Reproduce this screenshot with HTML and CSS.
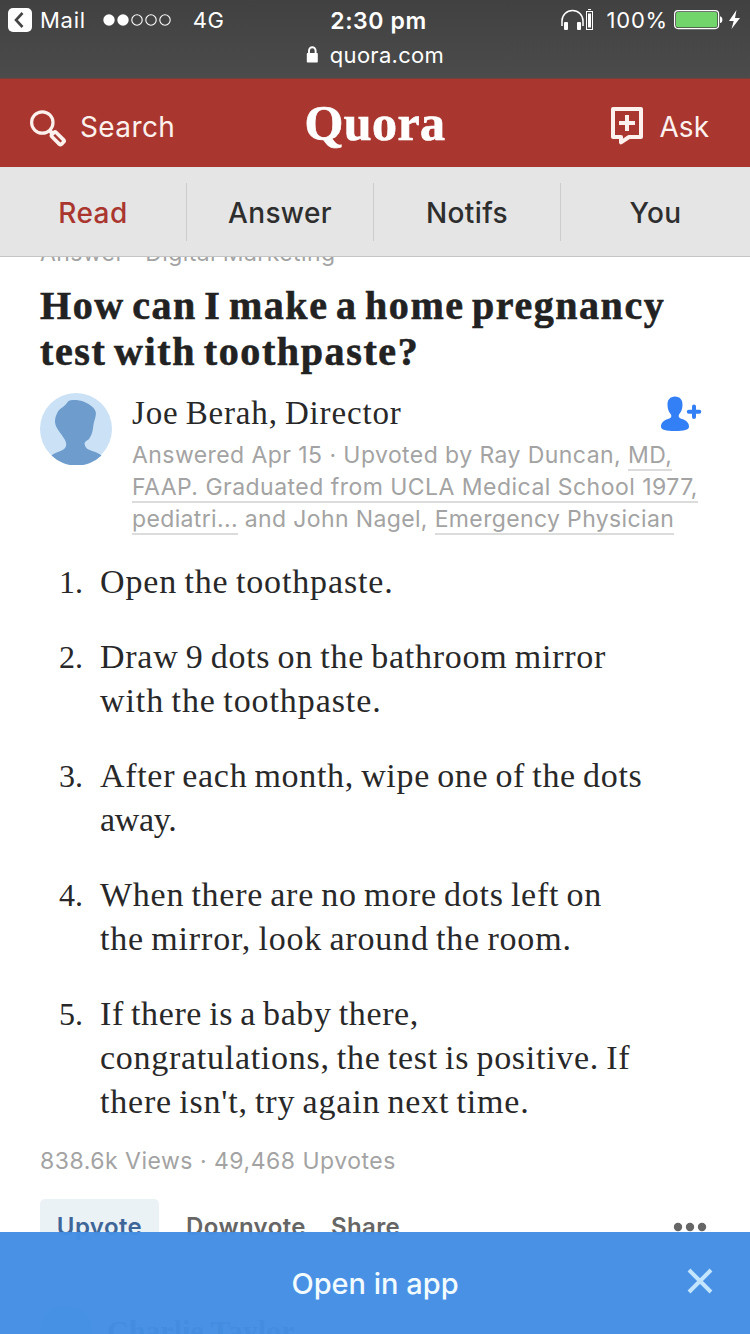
FILE: index.html
```html
<!DOCTYPE html>
<html lang="en">
<head>
<meta charset="utf-8">
<title>Quora</title>
<link rel="stylesheet" href="styles.css">
</head>
<body>
<div class="screen">
  <div class="browser">
    <div class="status">
      <div class="status-left">
        <svg class="back" width="24" height="24" viewBox="0 0 24 24"><rect width="24" height="24" rx="5" fill="#fff"/><path d="M14.500 5 8 12l6.500 7" fill="none" stroke="#444" stroke-width="2.600"/></svg>
        <span class="mail">Mail</span>
        <svg class="signal" width="70" height="12" viewBox="0 0 70 12"><g fill="#fff"><circle cx="6" cy="6" r="5.700"/><circle cx="20" cy="6" r="5.700"/></g><g fill="none" stroke="#fff" stroke-width="1.100"><circle cx="34" cy="6" r="5.200"/><circle cx="48" cy="6" r="5.200"/><circle cx="62" cy="6" r="5.200"/></g></svg>
        <span class="net">4G</span>
      </div>
      <span class="clock">2:30 pm</span>
      <div class="status-right">
        <svg class="phones" width="34" height="22" viewBox="0 0 34 22"><path d="M1 17v-5a10.500 10.500 0 0 1 21 0v5" fill="none" stroke="#fff" stroke-width="1.500"/><rect x="3" y="13" width="4" height="8" rx="1" fill="#fff"/><rect x="16" y="13" width="4" height="8" rx="1" fill="#fff"/><rect x="25.500" y="2.500" width="6" height="18" fill="none" stroke="#fff"/><rect x="27" y="4.500" width="3" height="14" fill="#fff"/><path d="M27 .5h3" stroke="#fff"/></svg>
        <span class="percent">100%</span>
        <svg class="battery" width="66" height="20" viewBox="0 0 66 20"><rect x=".6" y=".6" width="44" height="18" rx="3.500" fill="none" stroke="#fff" stroke-width="1.200"/><rect x="2" y="2" width="41.200" height="15.200" rx="2" fill="#72d56b"/><path d="M46 6.200c3.200.5 3.200 6.400 0 6.900z" fill="#fff"/><path d="M62.500 0 55 11h4.700L57.500 19 66 8h-5z" fill="#fff"/></svg>
      </div>
    </div>
    <div class="address">
      <svg width="13" height="17" viewBox="0 0 13 17"><rect x=".8" y="7" width="11" height="9.500" rx=".8" fill="#fff"/><path d="M3 8V4.500a3.300 3.300 0 0 1 6.600 0V8" fill="none" stroke="#fff" stroke-width="1.900"/></svg>
      <span>quora.com</span>
    </div>
  </div>

  <header class="header">
    <div class="search">
      <svg width="38" height="38" viewBox="0 0 38 38" fill="none" stroke="#fdf1ee"><circle cx="13.300" cy="13.500" r="10.700" stroke-width="3.200"/><path d="m20.500 21.500 3.500 3.500" stroke-width="4"/><rect x="-3" y="0" width="6" height="13.500" rx="1.500" transform="translate(24 24.500) rotate(-45)" stroke-width="3.600"/></svg>
      <span>Search</span>
    </div>
    <span class="logo">Quora</span>
    <div class="ask">
      <svg width="34" height="40" viewBox="0 0 34 40" fill="none" stroke="#fdf1ee" stroke-width="4" stroke-linejoin="round"><path d="M3 3h28v28H19l-8 5.300V31H3z"/><path d="M17 9v16M9 17h16" stroke-width="4"/></svg>
      <span>Ask</span>
    </div>
  </header>

  <nav class="tabs">
    <span class="tab active">Read</span>
    <span class="tab">Answer</span>
    <span class="tab">Notifs</span>
    <span class="tab">You</span>
  </nav>

  <main class="feed">
    <div class="topic">Answer · Digital Marketing</div>
    <h1 class="title"><span class="t1">How can I make a home pregnancy</span><br><span class="t2">test with toothpaste?</span></h1>
    <section class="author">
      <svg class="avatar" width="72" height="72" viewBox="0 0 72 72"><circle cx="36" cy="36" r="36" fill="#cae1f6"/><path d="M11.500 62.500c5-4.500 13-4 14.500-9.500.6-2 0-4-1-6C21 40 15 35 15 28.500c0-4.500 1.500-7 3-10 2.500-4 5-3.500 8.500-8 1.500-2.500 3-3.500 6.500-3.500 5 0 8 .5 11.500 2 5.500 2.500 10.500 6 11.300 10.500.6 4.500-2 8-2.500 13.500-.5 5-1.500 9-4 12.500-1.300 2-4.300 2.500-4.800 5 .5 3 1.500 5 4.500 6.200 4 1.800 8.500 2.300 12.500 5.800A36 36 0 0 1 11.500 62.500z" fill="#6d9ccd"/></svg>
      <div class="author-text">
        <div class="name-row">
          <span class="name">Joe Berah, Director</span>
          <svg class="follow" width="44" height="38" viewBox="0 0 44 38" fill="#337ff5"><path d="M16 1.500c5 0 7.700 3.500 7.500 8.500-.1 5-2 7.500-3.500 9.500-1 2.500 0 3.500 3 4.500 4.500 1.500 7 4 7 7.500 0 3.500-5 4.500-14 4.500S2 35 2 31.500c0-3.500 2.500-6 7-7.500 3-1 4-2 3-4.500-1.500-2-3.400-4.500-3.500-9.500C8.300 5 11 1.500 16 1.500z"/><path d="M35 11.500v10.500M29.800 16.700h10.500" stroke="#337ff5" stroke-width="4" stroke-linecap="round"/></svg>
        </div>
        <div class="meta">
          <div class="m1">Answered Apr 15 · Upvoted by Ray Duncan, <u>MD,</u></div>
          <div class="m2"><u>FAAP. Graduated from UCLA Medical School 1977,</u></div>
          <div class="m3"><u>pediatri...</u> and John Nagel, <u>Emergency Physician</u></div>
        </div>
      </div>
    </section>
    <ol class="steps">
      <li><b>1.</b><p><span class="s1">Open the toothpaste.</span></p></li>
      <li><b>2.</b><p><span class="s2">Draw 9 dots on the bathroom mirror</span><br><span class="s3">with the toothpaste.</span></p></li>
      <li><b>3.</b><p><span class="s4">After each month, wipe one of the dots</span><br><span class="s5">away.</span></p></li>
      <li><b>4.</b><p><span class="s6">When there are no more dots left on</span><br><span class="s7">the mirror, look around the room.</span></p></li>
      <li><b>5.</b><p><span class="s8">If there is a baby there,</span><br><span class="s9">congratulations, the test is positive. If</span><br><span class="s10">there isn't, try again next time.</span></p></li>
    </ol>
    <div class="stats">838.6k Views · 49,468 Upvotes</div>
    <div class="actions">
      <span class="upvote">Upvote</span>
      <span class="downvote">Downvote</span>
      <span class="share">Share</span>
      <svg class="more" width="34" height="10" viewBox="0 0 34 10" fill="#666"><circle cx="5" cy="5" r="4.200"/><circle cx="17" cy="5" r="4.200"/><circle cx="29" cy="5" r="4.200"/></svg>
    </div>
    <div class="comment"><span class="comment-avatar"></span><span class="comment-name">Charlie Taylor</span></div>
  </main>

  <div class="banner">
    <span>Open in app</span>
    <svg class="close" width="26" height="26" viewBox="0 0 26 26"><path d="m2 2 22 22M24 2 2 24" stroke="#c4e5ff" stroke-width="4"/></svg>
  </div>
</div>
</body>
</html>
```
FILE: styles.css
```css
* { box-sizing: border-box; }
body { margin: 0; background: #fff; }
svg { display: block; flex: none; }
.screen {
  position: relative;
  width: 750px;
  height: 1334px;
  overflow: hidden;
  display: flex;
  flex-direction: column;
  font-family: Inter, "Liberation Sans", sans-serif;
  white-space: nowrap;
}

.browser {
  flex: none;
  height: 79px;
  background: linear-gradient(#414141, #4b4b4c);
  border-bottom: 1px solid #74403e;
  color: #fff;
  font-size: 22px;
}
.status {
  display: grid;
  grid-template-columns: 1fr auto 1fr;
  align-items: center;
  height: 40px;
  padding: 0 10px 0 8px;
}
.status-left, .status-right { display: flex; align-items: center; }
.status-right { justify-content: flex-end; }
.mail { margin-left: 8px; letter-spacing: 0.7px; }
.signal { margin-left: 17px; }
.net { margin-left: 20px; letter-spacing: 0.6px; }
.clock { font-size: 23px; font-weight: 600; letter-spacing: 0.6px; padding-left: 9px; padding-top: 2px; }
.percent { margin: 0 6px 0 11px; letter-spacing: 0.8px; }
.address {
  display: flex;
  justify-content: center;
  align-items: center;
  gap: 11px;
  height: 29px;
  letter-spacing: 0.3px;
}

.header {
  flex: none;
  display: grid;
  grid-template-columns: 1fr auto 1fr;
  align-items: center;
  height: 88px;
  padding: 6px 41px 0 29px;
  background: #a9362f;
  color: #fdf1ee;
  font-size: 28px;
}
.search { display: flex; align-items: center; gap: 13px; letter-spacing: 0.4px; }
.search svg { margin-top: 4px; }
.search span, .ask span { padding-top: 2px; }
.ask { display: flex; justify-content: flex-end; align-items: center; gap: 15px; }
.ask svg { margin-right: 1px; }
.logo {
  font: bold 50px/50px "Liberation Serif", serif;
  letter-spacing: 0.4px;
  -webkit-text-stroke: 0.7px #fff;
  color: #fff;
  margin-top: -6px;
  padding-left: 12px;
}

.tabs {
  flex: none;
  display: grid;
  grid-template-columns: 187px 187px 187px 1fr;
  align-items: center;
  height: 90px;
  background: #e5e5e5;
  border-bottom: 1px solid #c5c5c5;
  color: #2e2e2e;
  font-size: 28px;
  font-weight: 500;
  letter-spacing: 0.4px;
}
.tab {
  height: 58px;
  line-height: 60px;
  text-align: center;
  border-right: 1px solid #ccc;
}
.tab:last-child { border-right: 0; }
.active { color: #a9362f; }

.feed {
  flex: 1;
  min-height: 0;
  overflow: hidden;
  padding: 0 40px;
  font-family: "Liberation Serif", serif;
  color: #282829;
}
.topic, .meta, .stats, .actions { font-family: Inter, "Liberation Sans", sans-serif; }
.topic, .meta, .stats {
  font-size: 23px;
  line-height: 32px;
  color: #a3a3a3;
}
.topic { margin-top: -20px; letter-spacing: 0.4px; }
.title {
  margin: 14px 0 0;
  font-size: 40px;
  line-height: 46px;
  word-spacing: -4px;
  color: #222;
  -webkit-text-stroke: 0.6px #222;
}
.t1 { letter-spacing: 1.54px; }
.t2 { letter-spacing: 1.62px; }
.author { display: flex; gap: 20px; margin-top: 18px; }
.author-text { flex: 1; }
.name-row {
  display: flex;
  justify-content: space-between;
  align-items: center;
  height: 40px;
  padding-right: 7px;
}
.name { font-size: 33px; line-height: 40px; letter-spacing: 0.85px; word-spacing: -2px; }
.follow { margin-top: 2px; }
.meta { margin-top: 6px; }
.meta u { text-decoration: none; border-bottom: 2px solid #dcdcdc; }
.m1 { letter-spacing: 0.43px; }
.m2 { letter-spacing: 0.47px; }
.m3 { letter-spacing: 0.36px; }
.steps {
  list-style: none;
  margin: 25px 0 0;
  padding: 0;
  display: grid;
  gap: 31px;
  font-size: 34px;
  line-height: 44px;
}
.steps li { display: grid; grid-template-columns: 43px 1fr; column-gap: 17px; }
.steps b { font-weight: normal; font-size: 32px; text-align: right; }
.steps p { margin: 0; word-spacing: -2px; }
.s1 { letter-spacing: 0.86px; }
.s2 { letter-spacing: 0.74px; }
.s3 { letter-spacing: 0.92px; }
.s4 { letter-spacing: 0.68px; }
.s5 { letter-spacing: -0.3px; }
.s6 { letter-spacing: 0.74px; }
.s7 { letter-spacing: 0.82px; }
.s8 { letter-spacing: 0.62px; }
.s9 { letter-spacing: 0.72px; }
.s10 { letter-spacing: 0.8px; }
.stats { margin-top: 21px; letter-spacing: 0.5px; }
.actions {
  display: flex;
  align-items: center;
  height: 54px;
  margin-top: 22px;
  font-size: 24px;
  font-weight: 600;
  letter-spacing: 0.4px;
  color: #666;
}
.actions span { line-height: 56px; padding-top: 1px; }
.actions .upvote {
  width: 119px;
  height: 54px;
  padding-top: 0;
  text-align: center;
  border-radius: 5px;
  background: #ebf2f6;
  color: #3f6699;
}
.downvote { margin-left: 27px; }
.share { margin-left: 25px; }
.more { margin: 2px 3px 0 auto; }
.comment { display: flex; gap: 15px; margin-top: 52px; }
.comment-avatar { width: 52px; height: 52px; border-radius: 50%; background: #cae1f6; }
.comment-name { font-size: 30px; font-weight: bold; line-height: 52px; }

.banner {
  position: absolute;
  left: 0;
  right: 0;
  bottom: 0;
  height: 102px;
  display: grid;
  grid-template-columns: 1fr auto 1fr;
  align-items: center;
  padding: 0 37px;
  background: rgba(68, 142, 227, 0.975);
  color: #f2fbff;
  font-size: 29px;
  font-weight: 500;
}
.banner span { grid-column: 2; }
.close { justify-self: end; margin-bottom: 4px; }
```
